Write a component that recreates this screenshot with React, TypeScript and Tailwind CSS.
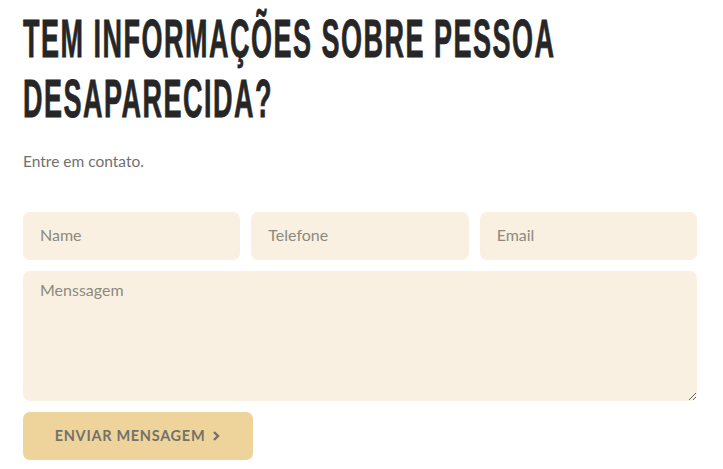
import React from "react";

export default function App() {
  return (
    <div className="w-[723px] h-[469px] bg-white overflow-hidden">
      <div className="pl-[23px] pt-[8px] w-[697px]">
        <h2 className="text-[#262626] text-[54px] leading-[60px] font-bold tracking-[3px] whitespace-nowrap [font-family:'Liberation_Sans_Narrow','Liberation_Sans',sans-serif] [-webkit-text-stroke:0.8px_#262626]">
          <span className="block origin-left scale-x-[0.5]">
            TEM INFORMAÇÕES SOBRE PESSOA
            <br />
            DESAPARECIDA?
          </span>
        </h2>
        <p className="mt-[23px] text-[15.5px] leading-[20px] text-[#707070] [font-family:Lato,sans-serif]">
          Entre em contato.
        </p>
        <form className="mt-[41px] flex flex-col gap-[11px] [font-family:Lato,sans-serif]">
          <div className="grid grid-cols-3 gap-[11px]">
            {["Name", "Telefone", "Email"].map((p) => (
              <input
                key={p}
                placeholder={p}
                className="h-[48px] rounded-[7px] bg-[#f9f0e1] px-[17px] pb-[3px] text-[16px] text-[#555] placeholder:text-[#8c8a80] outline-none"
              />
            ))}
          </div>
          <textarea
            placeholder="Menssagem"
            className="h-[130px] rounded-[7px] bg-[#f9f0e1] px-[17px] pt-[7px] pb-[10px] text-[16px] text-[#555] placeholder:text-[#8c8a80] outline-none"
          />
          <div>
            <button
              type="button"
              className="h-[48px] w-[230px] rounded-[7px] bg-[#eed49a] flex items-center justify-center gap-[7px] text-[14.5px] font-bold tracking-[0.7px] text-[#72726c]"
            >
              ENVIAR MENSAGEM
              <svg width="9" height="12" viewBox="0 0 9 12" fill="none">
                <path d="M2 2l4 4-4 4" stroke="#72726c" strokeWidth="2.4" />
              </svg>
            </button>
          </div>
        </form>
      </div>
    </div>
  );
}
